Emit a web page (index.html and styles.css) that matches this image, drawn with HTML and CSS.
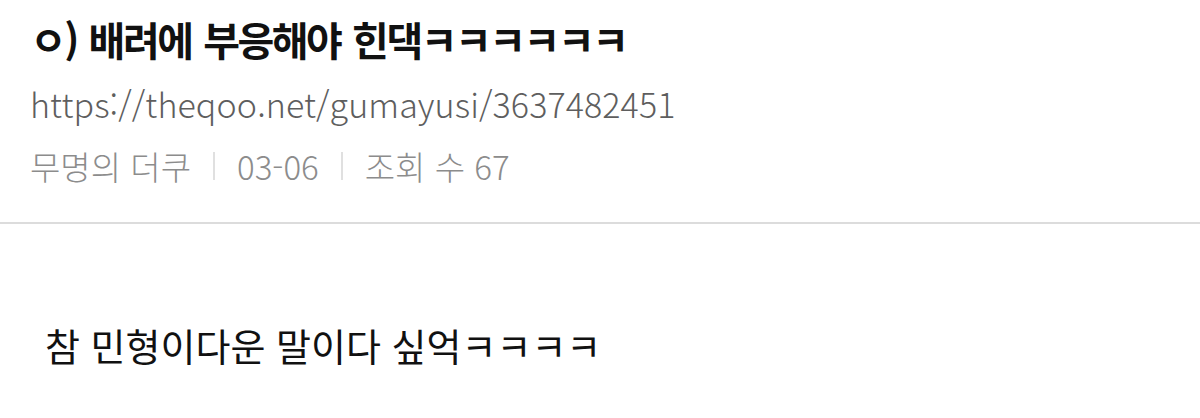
FILE: index.html
```html
<!DOCTYPE html>
<html lang="ko">
<head>
<meta charset="utf-8">
<link rel="stylesheet" href="styles.css">
</head>
<body>
<div class="page">
  <header class="head">
    <h1 class="title">ㅇ) 배려에 부응해야 힌댁ㅋㅋㅋㅋㅋㅋ</h1>
    <div class="url">https://theqoo.net/gumayusi/3637482451</div>
    <div class="meta">
      <span>무명의 더쿠</span>
      <span class="sep"></span>
      <span>03-06</span>
      <span class="sep"></span>
      <span>조회 수 67</span>
    </div>
  </header>
  <div class="body">
    <p class="text">참 민형이다운 말이다 싶억ㅋㅋㅋㅋ</p>
  </div>
</div>
</body>
</html>
```

FILE: styles.css
```css
html, body {
  margin: 0;
  padding: 0;
  background: #fff;
}
.page {
  width: 1200px;
  height: 418px;
  overflow: hidden;
  font-family: "Noto Sans CJK KR", "Noto Sans", sans-serif;
}
.head {
  padding: 15px 30px 36px;
  border-bottom: 2px solid #dcdcdc;
}
.title {
  margin: 0;
  font-size: 40px;
  font-weight: 700;
  line-height: 48px;
  letter-spacing: -2.5px;
  word-spacing: 3px;
  color: #111;
}
.url {
  margin-top: 21px;
  font-size: 34px;
  font-weight: 300;
  line-height: 40px;
  letter-spacing: 0.1px;
  color: #5e5e5e;
}
.meta {
  margin-top: 22px;
  display: flex;
  align-items: center;
  gap: 22px;
  font-size: 33px;
  font-weight: 300;
  line-height: 40px;
  color: #8c8c8c;
}
.sep {
  width: 2px;
  height: 28px;
  background: #e0e0e0;
}
.body {
  padding: 0 45px;
}
.text {
  margin: 97px 0 0;
  font-size: 38px;
  line-height: 48px;
  color: #111;
}
```
